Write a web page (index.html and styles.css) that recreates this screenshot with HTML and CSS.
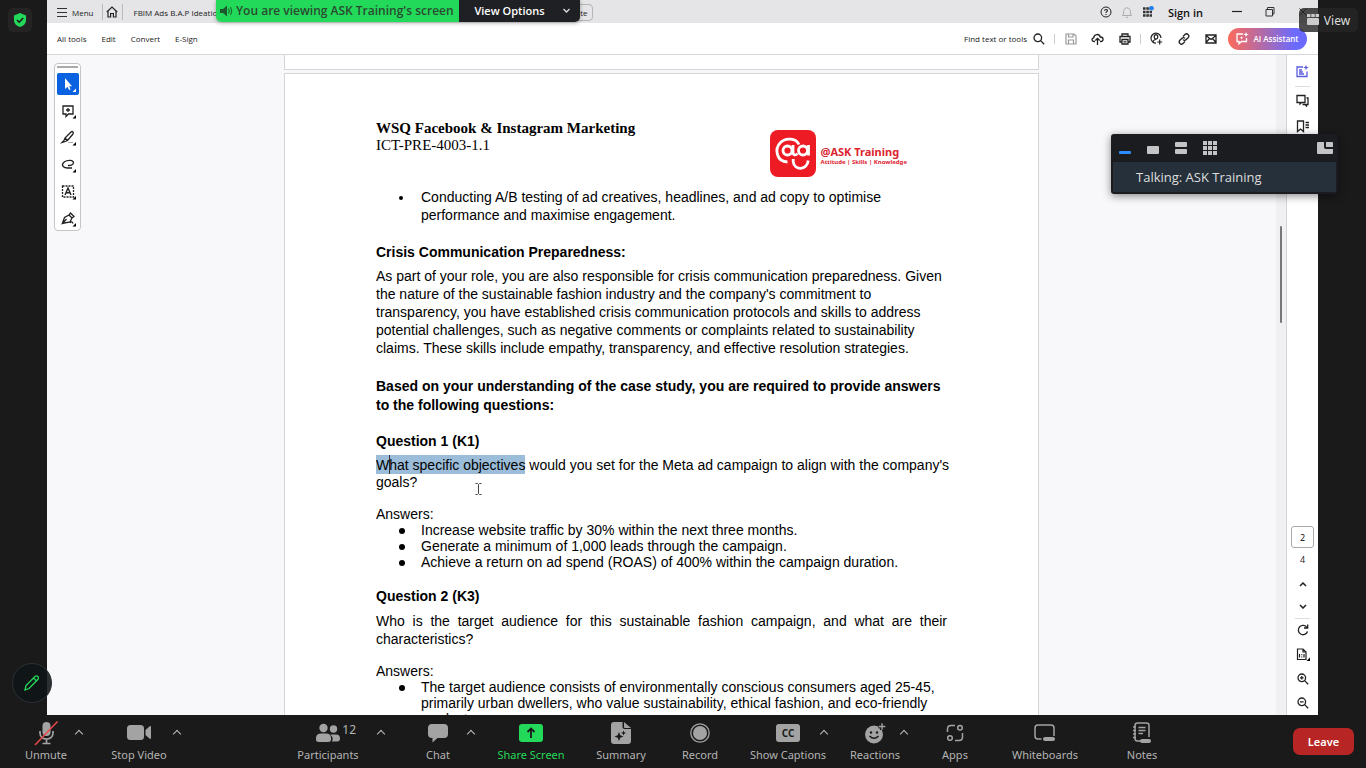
FILE: index.html
```html
<!DOCTYPE html>
<html lang="en">
<head>
<meta charset="utf-8">
<title>ASK Training meeting</title>
<link rel="stylesheet" href="styles.css">
</head>
<body>
<main class="stage">
  <button class="shield" aria-label="Meeting security">
    <svg width="14" height="16" viewBox="0 0 14 16"><path d="M7 1 13 3.500V8c0 3.600-2.500 5.800-6 7C3.500 13.800 1 11.600 1 8V3.500Z" fill="#23d959"/><path d="M4 8l2.200 2.200L10.200 6" fill="none" stroke="#1a1a1a" stroke-width="1.600"/></svg>
  </button>

  <section class="window">
    <header class="titlebar">
      <button class="menu-btn"><svg width="10" height="9" viewBox="0 0 10 9"><path d="M0 .5h10M0 4.500h10M0 8.500h10" stroke="#333"/></svg>Menu</button>
      <button class="home" aria-label="Home"><svg width="12" height="12" viewBox="0 0 12 12" fill="none" stroke="#222" stroke-width="1.200"><path d="M.8 6 6 1l5.200 5M2 5.300V11h2.600V7.500h2.800V11H10V5.300"/></svg></button>
      <span class="tab">FBIM Ads B.A.P Ideation</span>
      <button class="create">Create</button>
      <div class="title-right">
        <svg width="12" height="12" viewBox="0 0 12 12" fill="none" stroke="#222"><circle cx="6" cy="6" r="5"/><path d="M4.600 4.800C4.600 3 7.400 3 7.400 4.700 7.400 5.700 6 5.700 6 7M6 8v1" stroke-width="1.100"/></svg>
        <svg width="12" height="12" viewBox="0 0 12 12" fill="none" stroke="#aaa"><path d="M1.500 9.500C3 8 2.500 6 2.800 4.500 3.500 1 8.500 1 9.200 4.500 9.500 6 9 8 10.500 9.500ZM4.800 11.300h2.400"/></svg>
        <svg width="12" height="12" viewBox="0 0 12 12"><path d="M1 2.500h9M1 6h9M1 9.500h9" stroke="#333" stroke-width="2.600" stroke-dasharray="2.600 .7"/><circle cx="9.500" cy="2.200" r="2.300" fill="#2680eb"/></svg>
        <a class="signin" href="#">Sign in</a>
        <button class="win" aria-label="Minimize"><svg width="10" height="10" viewBox="0 0 10 10"><path d="M0 4.500h10" stroke="#222" stroke-width="1.200"/></svg></button>
        <button class="win" aria-label="Restore"><svg width="10" height="10" viewBox="0 0 10 10" fill="none" stroke="#333"><path d="M1 2.500h6.500V9H1ZM2.500 2.500v-2H9v6.500H7.500"/></svg></button>
        <button class="win" aria-label="Close"><svg width="8" height="8" viewBox="0 0 8 8"><path d="M.5.5l7 7M7.500.5l-7 7" stroke="#222"/></svg></button>
      </div>
    </header>

    <nav class="menubar">
      <a href="#">All tools</a><a href="#">Edit</a><a href="#">Convert</a><a href="#">E-Sign</a>
      <div class="tools-right">
        <button class="find">Find text or tools <svg width="12" height="12" viewBox="0 0 12 12" fill="none" stroke="#222" stroke-width="1.300"><circle cx="4.800" cy="4.800" r="3.800"/><path d="m7.600 7.600 3.600 3.600"/></svg></button>
        <i class="sep"></i>
        <button class="tool" aria-label="Save"><svg width="12" height="12" viewBox="0 0 12 12" fill="none" stroke="#999" stroke-width="1.200"><path d="M1 1h8l2 2v8H1ZM3.500 1v3h4.500V1M3.500 11V7h5v4"/></svg></button>
        <button class="tool" aria-label="Upload"><svg width="13" height="12" viewBox="0 0 13 12" fill="none" stroke="#222" stroke-width="1.300"><path d="M4 8.500H3C.5 8.500.2 5.200 2.800 4.800 2.800 1 8.400.2 9.200 4c3.600-.3 3.800 4.500.6 4.500H9M6.500 12V5.500M4.300 7.500l2.200-2.200 2.200 2.200"/></svg></button>
        <button class="tool" aria-label="Print"><svg width="12" height="12" viewBox="0 0 12 12" fill="none" stroke="#222" stroke-width="1.300"><path d="M3 3.500V1h6v2.500M3 9H1V3.500h10V9H9M3 6.500h6V11H3ZM4.500 8.800h3"/></svg></button>
        <i class="sep"></i>
        <button class="tool" aria-label="Share"><svg width="13" height="13" viewBox="0 0 13 13" fill="none" stroke="#222" stroke-width="1.200"><path d="M6 11.200A5 5 0 1 1 11 6M3 10c.3-2 2-2.400 3-2.500M9.700 7.500v5M7.200 10h5"/><ellipse cx="6" cy="4.800" rx="1.800" ry="2.200"/></svg></button>
        <button class="tool" aria-label="Copy link"><svg width="12" height="12" viewBox="0 0 12 12" fill="none" stroke="#222" stroke-width="1.300"><path d="m5 3.500 2-2c2-2 5 1 3.300 3l-2.300 2.300c-1 1-2.500.6-3-.3M7 8.500l-2 2c-2 2-5-1-3.300-3L4 5.200c1-1 2.500-.6 3 .3"/></svg></button>
        <button class="tool" aria-label="Email"><svg width="12" height="12" viewBox="0 0 12 12" fill="none" stroke="#222" stroke-width="1.300"><path d="M1 2h10v8H1ZM1 2.500l5 4 5-4M1 9.500l3.500-4M11 9.500l-3.500-4"/></svg></button>
        <button class="ai"><svg width="13" height="13" viewBox="0 0 13 13" fill="none" stroke="#fff" stroke-width="1.300"><path d="M7 2H1v7.500h2v2.300l2.500-2.300H10.500V6"/><path d="m10 0 .8 1.800 1.900.7-1.900.8-.8 1.700-.8-1.700-1.900-.8 1.900-.7ZM5.500 4l.5 1.300 1.300.5L6 6.300l-.5 1.200L5 6.300l-1.200-.5L5 5.300Z" fill="#fff" stroke="none"/></svg>AI Assistant</button>
      </div>
    </nav>

    <div class="workspace">
      <div class="viewer">
        <div class="sheet sheet-end"></div>
        <article class="sheet sheet-main">
          <header class="doc-head">
            <div><strong>WSQ Facebook &amp; Instagram Marketing</strong><br>ICT-PRE-4003-1.1</div>
            <div class="brand">
              <svg width="46" height="47" viewBox="0 0 46 47"><rect width="46" height="47" rx="8" fill="#ed1c24"/><g fill="none" stroke="#fff" stroke-width="2.800"><circle cx="17.500" cy="20.500" r="4.500"/><circle cx="33" cy="20.500" r="4.500"/><path d="M23 15v7.500c0 2.500 2.500 3.500 4.500 1M38.500 15v10.500M29 14.500C26 8 15.500 7.500 10.500 12.500 4 19 6.500 31.500 17.500 32M23.200 29v2.500c1 9.500 14 9 15-1"/></g></svg>
              <div class="brand-text"><b>@ASK Training</b><small>Attitude | Skills | Knowledge</small></div>
            </div>
          </header>
          <ul class="dots intro"><li>Conducting A/B testing of ad creatives, headlines, and ad copy to optimise performance and maximise engagement.</li></ul>
          <h2>Crisis Communication Preparedness:</h2>
          <p class="wide">As part of your role, you are also responsible for crisis communication preparedness. Given the nature of the sustainable fashion industry and the company's commitment to transparency, you have established crisis communication protocols and skills to address potential challenges, such as negative comments or complaints related to sustainability claims. These skills include empathy, transparency, and effective resolution strategies.</p>
          <h2 class="lead">Based on your understanding of the case study, you are required to provide answers to the following questions:</h2>
          <h2>Question 1 (K1)</h2>
          <p class="q1"><mark>What specific objectives</mark> would you set for the Meta ad campaign to align with the company's goals?</p>
          <p class="answers">Answers:</p>
          <ul class="dots"><li>Increase website traffic by 30% within the next three months.</li><li>Generate a minimum of 1,000 leads through the campaign.</li><li>Achieve a return on ad spend (ROAS) of 400% within the campaign duration.</li></ul>
          <h2 class="q2h">Question 2 (K3)</h2>
          <p class="just">Who is the target audience for this sustainable fashion campaign, and what are their characteristics?</p>
          <p class="answers">Answers:</p>
          <ul class="dots"><li>The target audience consists of environmentally conscious consumers aged 25-45, primarily urban dwellers, who value sustainability, ethical fashion, and eco-friendly products.</li></ul>
          <svg class="ibeam" width="7" height="12" viewBox="0 0 7 12"><path d="M.5.5h2l1 1 1-1h2M3.500 1.500v9M.5 11.500h2l1-1 1 1h2" fill="none" stroke="#444"/></svg>
        </article>

        <div class="palette">
          <i class="grip"></i>
          <button class="pal on" aria-label="Select"><svg width="22" height="22" viewBox="0 0 22 22"><path d="M8 5v11l2.500-2.200 1.600 3.200 1.500-.8-1.500-3H15Z" fill="#fff"/><path d="M19 15.500V19h-3.500Z" fill="#fff"/></svg></button>
          <button class="pal" aria-label="Comment"><svg width="22" height="22" viewBox="0 0 22 22"><path d="M6 6h10v8h-4.500L9 16.500V14H6ZM11 8v4M9 10h4" fill="none" stroke="#222" stroke-width="1.300"/><path d="M19 15v3.500h-3.500Z"/></svg></button>
          <button class="pal" aria-label="Highlight"><svg width="22" height="22" viewBox="0 0 22 22"><path d="m8 11 6-6c1.500-1.200 3 .5 2 2l-5.500 6.500L7 15l-2 .5 2-2ZM8 11l2.500 2.500" fill="none" stroke="#222" stroke-width="1.300"/><path d="M11 15.500h5" stroke="#aaa"/><path d="M19 15v3.500h-3.500Z"/></svg></button>
          <button class="pal" aria-label="Draw"><svg width="22" height="22" viewBox="0 0 22 22"><path d="M11 11.300c1.500.6 5.500-.3 5.500-2.600 0-3-6-3-9-1C3.500 10.500 6 14 10 14h5" fill="none" stroke="#222" stroke-width="1.300"/><path d="M19 15v3.500h-3.500Z"/></svg></button>
          <button class="pal" aria-label="Text"><svg width="22" height="22" viewBox="0 0 22 22"><path d="M5.500 5h11v11h-11Z" fill="none" stroke="#222" stroke-width="1.300" stroke-dasharray="2 1"/><path d="m8 14 3-7 3 7M9 11.800h4" fill="none" stroke="#222" stroke-width="1.400"/><path d="M19 15v3.500h-3.500Z"/></svg></button>
          <button class="pal" aria-label="Sign"><svg width="22" height="22" viewBox="0 0 22 22"><path d="m5.500 15 2-5.500L12 7l3 3-2 4-7.500 1.500L9.500 11M12 7l1.500-2 3.500 3.500-2 1.500M13 15c1-1.500 2-1.500 3 .5" fill="none" stroke="#222" stroke-width="1.300"/><path d="M19 15v3.500h-3.500Z"/></svg></button>
        </div>
      </div>
      <div class="scroll"><i class="thumb"></i></div>
      <aside class="rail">
        <button class="r" aria-label="Summary"><svg width="13" height="13" viewBox="0 0 13 13" fill="none" stroke="#5c5ce0" stroke-width="1.300"><path d="M7 2H1v9.500h10V6.500M3 5h3M3 7h4M3 9h5"/><path d="m10 0 .8 1.800 2 .7-2 .8-.8 1.900-.8-1.900-1.900-.8 1.900-.7Z" fill="#5c5ce0" stroke="none"/></svg></button>
        <i class="rule top"></i>
        <button class="r" aria-label="Comments"><svg width="13" height="13" viewBox="0 0 13 13" fill="none" stroke="#222" stroke-width="1.300"><path d="M1 1.500h8v7H5.500L4 10V8.500H1ZM10.500 4H12v6.500h-1.500v1.500L9 10.500H6.500"/></svg></button>
        <button class="r" aria-label="Bookmarks"><svg width="13" height="13" viewBox="0 0 13 13" fill="none" stroke="#222" stroke-width="1.300"><path d="M1.500 1h6v10.500l-3-2.500-3 2.500ZM9.500 2.500H13M9.500 5H13M9.500 7.500H13"/></svg></button>
        <div class="pager">
          <input class="pageno" aria-label="Page" value="2">
          <span class="total">4</span>
          <button class="r" aria-label="Previous page"><svg width="8" height="5" viewBox="0 0 8 5"><path d="m1 4 3-3 3 3" fill="none" stroke="#222" stroke-width="1.500"/></svg></button>
          <button class="r next" aria-label="Next page"><svg width="8" height="5" viewBox="0 0 8 5"><path d="m1 1 3 3 3-3" fill="none" stroke="#222" stroke-width="1.500"/></svg></button>
          <i class="rule low"></i>
          <button class="r" aria-label="Rotate"><svg width="12" height="12" viewBox="0 0 12 12"><path d="M10 3.500A4.700 4.700 0 1 0 10.500 7.500M10.700.5V4H7" fill="none" stroke="#222" stroke-width="1.300"/></svg></button>
          <button class="r" aria-label="Fit page"><svg width="14" height="13" viewBox="0 0 14 13"><path d="M1.500 1H7l3 3v7.500H1.500ZM7 1v3h3M3.500 6v3.500M8 6v3.500M5.800 6.300v1M5.800 8.500v1" fill="none" stroke="#222" stroke-width="1.200"/><path d="M14 9.500V13h-3.500Z"/></svg></button>
          <button class="r" aria-label="Zoom in"><svg width="12" height="12" viewBox="0 0 12 12" fill="none" stroke="#222" stroke-width="1.300"><circle cx="4.800" cy="4.800" r="3.800"/><path d="m7.600 7.600 3.600 3.600M3 4.800h3.600M4.800 3v3.600"/></svg></button>
          <button class="r" aria-label="Zoom out"><svg width="12" height="12" viewBox="0 0 12 12" fill="none" stroke="#222" stroke-width="1.300"><circle cx="4.800" cy="4.800" r="3.800"/><path d="m7.600 7.600 3.600 3.600M3 4.800h3.600"/></svg></button>
        </div>
      </aside>
    </div>
  </section>

  <div class="share-banner">
    <div class="viewing"><svg width="14" height="12" viewBox="0 0 14 12"><path d="M0 4h3l4-3.500v11L3 8H0Z" fill="#1b5a2c"/><path d="M8.500 3.500q1.500 2.500 0 5M10.500 2q2.500 4 0 8" fill="none" stroke="#1b5a2c"/></svg>You are viewing ASK Training's screen</div>
    <button class="options">View Options <svg width="7" height="5" viewBox="0 0 7 5"><path d="m.5 1 3 3 3-3" fill="none" stroke="#ddd" stroke-width="1.300"/></svg></button>
  </div>

  <button class="view"><svg width="12" height="12" viewBox="0 0 12 12" fill="#ccc"><path d="M0 0h3.400v3H0ZM4.300 0h3.400v3H4.300ZM8.600 0H12v3H8.600Z"/><rect y="4" width="12" height="7" rx="1"/></svg>View</button>

  <section class="speaker">
    <div class="modes">
      <button aria-label="Hide video"><svg width="12" height="14" viewBox="0 0 12 14"><rect y="10" width="12" height="3" rx="1" fill="#2d8cff"/></svg></button>
      <button aria-label="Thumbnail"><svg width="12" height="14" viewBox="0 0 12 14"><rect y="5" width="12" height="8" rx="1" fill="#c4c4c6"/></svg></button>
      <button aria-label="Side by side"><svg width="12" height="14" viewBox="0 0 12 14" fill="#c4c4c6"><rect y="1" width="12" height="5" rx="1"/><rect y="8" width="12" height="5" rx="1"/></svg></button>
      <button aria-label="Grid"><svg width="14" height="14" viewBox="0 0 14 14" fill="#c4c4c6"><path d="M0 0h4v4H0ZM5 0h4v4H5ZM10 0h4v4h-4ZM0 5h4v4H0ZM5 5h4v4H5ZM10 5h4v4h-4ZM0 10h4v4H0ZM5 10h4v4H5ZM10 10h4v4h-4Z"/></svg></button>
      <button class="pip" aria-label="Layout"><svg width="16" height="14" viewBox="0 0 16 14" fill="#c4c4c6"><path d="M1 1h6v5q0 2 2 2h7v4q0 1-1 1H1q-1 0-1-1V2q0-1 1-1ZM9 1h6q1 0 1 1v4H9.500Q9 6 9 5.500Z"/></svg></button>
    </div>
    <div class="talking">Talking: ASK Training</div>
  </section>

  <button class="annotate" aria-label="Annotate"><svg width="18" height="18" viewBox="0 0 18 18" fill="none" stroke="#23d959" stroke-width="1.300"><path d="m2 16 1-4.500L12 2.500c2-1.700 4.500.5 3 2.800L6 14.500ZM10.500 4l3 3"/></svg></button>
</main>

<footer class="toolbar">
  <button class="act a-mute"><span class="ico"><svg width="26" height="26" viewBox="0 0 26 26"><rect x="9.500" y="2" width="8" height="14" rx="4" fill="#a3a3a3"/><path d="M7 11v2c0 8 13 8 13 0v-2M13.500 19v4M9.500 23.500h8" fill="none" stroke="#a3a3a3" stroke-width="1.700"/><path d="M2 25 24.500 1.500" stroke="#e8484a" stroke-width="1.500"/></svg></span>Unmute</button>
  <button class="up" aria-label="Audio options"></button>
  <button class="act a-video"><span class="ico"><svg width="26" height="18" viewBox="0 0 26 18" fill="#a3a3a3"><rect y="1" x="1" width="17" height="15" rx="3.500"/><path d="m19.500 6 4-3.500q1.500-1 1.500.5v11q0 1.500-1.500.5l-4-3.500Z"/></svg></span>Stop Video</button>
  <button class="up" aria-label="Video options"></button>
  <button class="act a-people"><span class="ico"><svg width="26" height="20" viewBox="0 0 26 20" fill="#a3a3a3"><circle cx="8.500" cy="5" r="4.200"/><circle cx="18.500" cy="6" r="3.700"/><path d="M1 15q0-4.500 5-4.500h5q5 0 5 4.500v1.500Q16 19 13 19H4q-3 0-3-2.500ZM15 11.500h6q4 0 4 4 0 3-3 3h-5q2-4-2-7Z"/></svg></span>Participants<em>12</em></button>
  <button class="up" aria-label="Participant options"></button>
  <button class="act a-chat"><span class="ico"><svg width="22" height="20" viewBox="0 0 22 20" fill="#a3a3a3"><path d="M5 1h12q4 0 4 4v6q0 4-4 4h-6.500L5.500 19.500V15H5q-4 0-4-4V5q0-4 4-4Z"/></svg></span>Chat</button>
  <button class="up" aria-label="Chat options"></button>
  <button class="act a-share"><span class="ico"><svg width="24" height="18" viewBox="0 0 24 18"><rect width="24" height="18" rx="3" fill="#23d959"/><path d="M12 14V5M8.500 8 12 4.500 15.500 8" fill="none" stroke="#1a1a1a" stroke-width="1.800"/></svg></span>Share Screen</button>
  <button class="act a-summary"><span class="ico"><svg width="22" height="24" viewBox="0 0 22 24"><path d="M4 1h8.500v5q0 2 2 2H21v12q0 3-3 3H4q-3 0-3-3V4q0-3 3-3ZM14 1l7 6h-6q-1 0-1-1Z" fill="#a3a3a3"/><path d="m9 11 1.300 3.200 3.200 1.300-3.200 1.300L9 20l-1.300-3.200-3.200-1.300 3.200-1.300ZM13.500 9.500l.7 1.800 1.800.7-1.800.7-.7 1.800-.7-1.800-1.800-.7 1.800-.7Z" fill="#1a1a1a"/></svg></span>Summary</button>
  <button class="act a-record"><span class="ico"><svg width="20" height="20" viewBox="0 0 20 20"><circle cx="10" cy="10" r="9.200" fill="none" stroke="#a3a3a3" stroke-width="1.300"/><circle cx="10" cy="10" r="7" fill="#a3a3a3"/></svg></span>Record</button>
  <button class="act a-cc"><span class="ico"><span class="cc">CC</span></span>Show Captions</button>
  <button class="up" aria-label="Caption options"></button>
  <button class="act a-react"><span class="ico"><svg width="22" height="22" viewBox="0 0 22 22"><circle cx="10" cy="12.500" r="9" fill="#a3a3a3"/><circle cx="7" cy="10.500" r="1.200" fill="#1a1a1a"/><circle cx="13" cy="10.500" r="1.200" fill="#1a1a1a"/><path d="M5.500 14q4.500 4.500 9 0" fill="none" stroke="#1a1a1a" stroke-width="1.500"/><path d="M18 1v7M14.500 4.500h7" stroke="#1a1a1a" stroke-width="4"/><path d="M18 1.200v6.600M14.700 4.500h6.600" stroke="#a3a3a3" stroke-width="1.400"/></svg></span>Reactions</button>
  <button class="up" aria-label="Reaction options"></button>
  <button class="act a-apps"><span class="ico"><svg width="18" height="18" viewBox="0 0 18 18" fill="none" stroke="#a3a3a3" stroke-width="1.500"><path d="M9 1.500H5q-3.500 0-3.500 3.500v3M16.500 9v4q0 3.500-3.500 3.500H9"/><circle cx="14" cy="3.700" r="2.300"/><circle cx="4" cy="14" r="2.300"/></svg></span>Apps</button>
  <button class="act a-board"><span class="ico"><svg width="22" height="18" viewBox="0 0 22 18"><path d="M7.500 15H4q-3 0-3-3V4q0-3 3-3h13q3 0 3 3v8" fill="none" stroke="#a3a3a3" stroke-width="1.500"/><rect x="9" y="13" width="12" height="4" rx="2" fill="#a3a3a3"/></svg></span>Whiteboards</button>
  <button class="act a-notes"><span class="ico"><svg width="20" height="22" viewBox="0 0 20 22"><path d="M9 19H5.500Q3 19 3 16.500v-13Q3 1 5.500 1h9Q17 1 17 3.500V15M1 5h3M1 8.500h3M1 12h3M1 15.500h3M6.500 5.500h7M6.500 8.500h7M6.500 11.500H11" fill="none" stroke="#a3a3a3" stroke-width="1.500"/><rect x="8" y="17" width="11" height="4" rx="2" fill="#a3a3a3"/></svg></span>Notes</button>
  <button class="leave">Leave</button>
</footer>
</body>
</html>
```
FILE: styles.css
```css
* { box-sizing: border-box; }
body { margin: 0; height: 100vh; display: flex; flex-direction: column; overflow: hidden; background: #1a1a1a; font-family: "Noto Sans", "Open Sans", sans-serif; font-size: 12px; color: #222; }
button { font: inherit; color: inherit; background: none; border: 0; padding: 0; margin: 0; display: flex; align-items: center; justify-content: center; flex: none; white-space: nowrap; }
a { color: inherit; text-decoration: none; }
svg { display: block; flex: none; }

.stage { position: relative; flex: 1; min-height: 0; padding: 0 48px 0 47px; display: flex; }
.shield { position: absolute; left: 8px; top: 8px; width: 24px; height: 24px; border-radius: 5px; background: #242424; }
.window { flex: 1; min-width: 0; display: flex; flex-direction: column; background: #fff; font-family: "Open Sans", sans-serif; font-size: 8px; }

/* Document window title bar */
.titlebar { height: 23px; flex: none; display: flex; align-items: center; background: #e5e5e7; padding-left: 10px; padding-top: 1px; }
.menu-btn { gap: 5px; font-size: 8px; }
.home { width: 21px; height: 16px; border: solid #bbb; border-width: 0 1px; margin-left: 8px; }
.tab { width: 94px; margin-left: 11px; white-space: nowrap; }
.create { width: 72px; height: 17px; margin-left: 293px; padding-right: 4px; border: 1px solid #b5b5b5; border-radius: 4px; justify-content: flex-end; }
.title-right { margin-left: auto; display: flex; align-items: center; gap: 9px; padding-right: 10px; }
.signin { font-size: 11px; font-weight: 600; margin: 0 20px 0 5px; color: #111; }
.win { width: 10px; margin-right: 14px; }
.win:last-child { margin-right: 0; }

.menubar { height: 32px; flex: none; display: flex; align-items: center; gap: 15px; padding: 0 11px 0 10px; border-bottom: 1px solid #d8d7dc; }
.tools-right { margin-left: auto; display: flex; align-items: center; gap: 14px; }
.find { gap: 6px; }
.sep { width: 1px; height: 10px; background: #ccc; margin: 0 -5px; }
.tool { width: 13px; }
.ai { width: 79px; height: 22px; border-radius: 11px; gap: 4px; color: #fff; font-weight: 600; background: linear-gradient(90deg, #fd6a5b, #a66bb5 50%, #6b6aff 85%); margin-left: -3px; }

/* Document viewer */
.workspace { flex: 1; min-height: 0; display: flex; }
.viewer { position: relative; flex: 1; min-width: 0; overflow: hidden; background: #f8f7fa; display: flex; flex-direction: column; align-items: center; gap: 3px; }
.sheet { width: 755px; max-width: 100%; flex: none; background: #fff; border: 1px solid #d5d4d9; }
.sheet-end { height: 15px; border-top: 0; }
.sheet-main { position: relative; padding: 46px 91px 0; font-family: "Liberation Sans", Arial, sans-serif; font-size: 14px; line-height: 18px; color: #000; }
.doc-head { display: flex; justify-content: space-between; padding-right: 40px; font: 15px/17px "Liberation Serif", "Times New Roman", serif; }
.brand { display: flex; align-items: center; gap: 5px; margin-top: 10px; color: #dc2430; font-family: "Noto Sans", sans-serif; }
.brand-text { padding-top: 4px; }
.brand-text b { display: block; font-size: 11px; line-height: 12px; }
.brand-text small { display: block; font-size: 6px; line-height: 8px; font-weight: 700; }
.sheet-main h2 { margin: 0; font-size: 14px; line-height: 18px; }
.sheet-main p { margin: 0; }
.dots { margin: 0; padding: 0 0 0 45px; line-height: 16px; list-style: none; }
.dots li::before { content: ""; display: inline-block; width: 6px; height: 6px; margin: 0 16px 0 -22px; border-radius: 50%; background: #000; vertical-align: 1px; }
.intro { line-height: 18px; margin: 11px 0 19px; }
.intro li::before { width: 4px; height: 4px; margin-right: 18px; vertical-align: 2px; }
.wide { padding-top: 6px; }
.sheet-main .lead { margin: 20px 0 17px; line-height: 19px; }
.q1 { padding-top: 7px; line-height: 17px; }
.sheet-main .q1 { margin-right: -8px; }
.q1 mark { padding: 2px 0 1px; background: linear-gradient(#333, #333) 13px 0 / 1px 100% no-repeat #9bbdd9; color: inherit; }
.sheet-main .answers { padding-top: 15px; line-height: 16px; }
.sheet-main .q2h { margin-top: 17px; }
.just { text-align: justify; padding-top: 7px; }
.ibeam { position: absolute; left: 190px; top: 409px; }

.palette { position: absolute; left: 7px; top: 8px; width: 27px; padding: 2px 2px 0; display: flex; flex-direction: column; align-items: center; gap: 5px; background: #fff; border: 1px solid #c5c5c8; border-radius: 4px; }
.grip { width: 21px; height: 2px; background: #aaa; }
.pal { width: 22px; height: 22px; border-radius: 2px; }
.pal.on { background: #0b62e0; }

.scroll { width: 10px; flex: none; background: #f0eff2; padding-top: 171px; }
.thumb { display: block; width: 2px; height: 97px; margin-left: 4px; background: #77777b; border-radius: 1px; }
.rail { width: 32px; flex: none; border-left: 1px solid #d5d4d9; display: flex; flex-direction: column; align-items: center; gap: 13px; padding: 10px 0 6px; }
.rule { width: 15px; height: 1px; background: #ddd; flex: none; }
.rule.top { margin: -5px 0 -6px; }
.rule.low { margin: -3px 0 -7px; }
.pager { margin-top: auto; display: flex; flex-direction: column; align-items: center; gap: 12px; }
.pageno { width: 23px; height: 22px; border: 1px solid #aaa; border-radius: 3px; text-align: center; font: 9px "Open Sans", sans-serif; padding: 0; }
.total { font-size: 9px; line-height: 12px; margin: -6px 0 4px; }
.next { margin-top: 5px; }

/* Meeting overlays */
.share-banner { position: absolute; left: 216px; top: 0; display: flex; height: 22px; border-radius: 0 0 5px 5px; overflow: hidden; font-family: "Open Sans", sans-serif; font-weight: 600; box-shadow: 0 1px 4px #0005; }
.viewing { width: 243px; display: flex; align-items: center; gap: 2px; padding: 0 0 1px 4px; background: #23d959; color: #2a4a32; white-space: nowrap; }
.options { width: 121px; gap: 18px; padding: 0 0 1px 5px; background: #1f2023; color: #fff; font-size: 11px; }
.view { position: absolute; right: 8px; top: 8px; width: 59px; height: 24px; gap: 5px; border-radius: 5px; background: #262626d0; color: #ddd; }

.speaker { position: absolute; right: 28px; top: 134px; width: 227px; padding: 0 2px 2px; background: #1b1c1f; border-radius: 3px; box-shadow: 0 2px 8px #0007; color: #dedede; }
.modes { height: 28px; display: flex; align-items: center; gap: 16px; padding: 0 3px 0 6px; }
.pip { margin-left: auto; }
.talking { height: 30px; line-height: 30px; padding-left: 23px; background: #25303a; font-family: "Open Sans", sans-serif; font-size: 13px; }
.annotate { position: absolute; left: 12px; bottom: 12px; width: 40px; height: 40px; border-radius: 50%; background: #0f1417e0; border: 1px solid #2c3033; }

/* Meeting toolbar */
.toolbar { flex: none; height: 53px; display: flex; color: #b4b4b4; font-size: 11px; padding: 0 12px 0 1px; }
.act { position: relative; flex-direction: column; justify-content: flex-start; line-height: 15px; padding-top: 3px; }
.ico { height: 29px; display: flex; align-items: center; }
.act em { position: absolute; right: 20px; top: 7px; font-style: normal; font-size: 12px; }
.up { width: 10px; height: 10px; margin-top: 14px; }
.up::before { content: ""; width: 5px; height: 5px; border: solid #bbb; border-width: 1px 0 0 1px; transform: rotate(45deg); }
.a-mute { width: 56px; margin-left: 17px; }
.a-video { width: 66px; margin-left: 22px; }
.a-people { width: 96px; margin-left: 98px; }
.a-chat { width: 56px; margin-left: 24px; }
.a-share { width: 80px; margin-left: 15px; color: #23d959; }
.a-summary { width: 60px; margin-left: 20px; }
.a-record { width: 50px; margin-left: 24px; }
.a-cc { width: 62px; margin-left: 32px; }
.a-react { width: 48px; margin-left: 22px; }
.a-apps { width: 40px; margin-left: 26px; }
.a-board { width: 80px; margin-left: 30px; }
.a-notes { width: 40px; margin-left: 37px; }
.cc { width: 24px; height: 18px; border-radius: 3px; background: #a3a3a3; color: #1a1a1a; font-size: 10px; font-weight: 700; line-height: 18px; text-align: center; }
.leave { margin: 13px 0 0 auto; width: 61px; height: 27px; border-radius: 7px; background: #b82525; color: #fff; font-weight: 600; }
```
